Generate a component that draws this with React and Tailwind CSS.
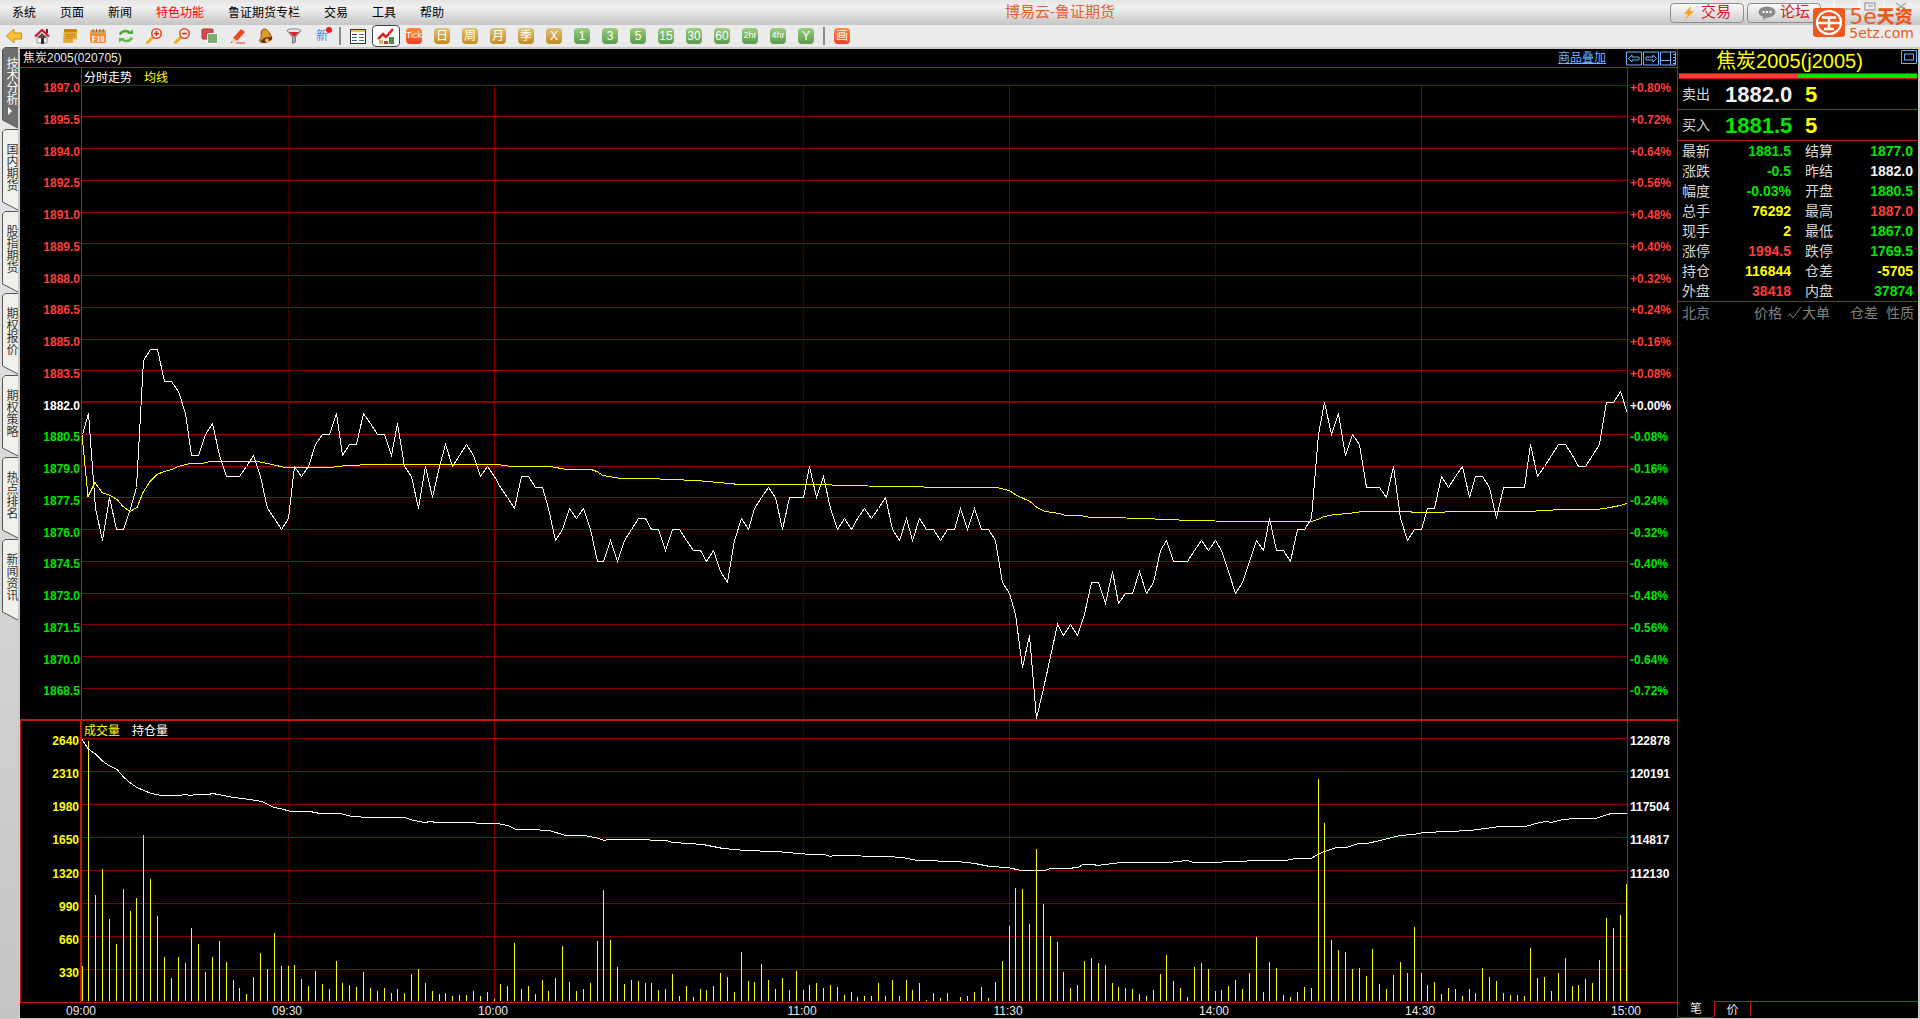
import clsx from 'clsx'

const MENU = ['系统', '页面', '新闻', '特色功能', '鲁证期货专栏', '交易', '工具', '帮助']
const SIDE_TABS = ['技术分析', '国内期货', '股指期货', '期权报价', '期权策略', '热点排名', '新闻资讯']

// one close per minute, 225 trading minutes
const PRICES = [
  1880.5, 1881.5, 1877, 1875.5, 1877.5, 1876, 1876, 1877, 1878, 1884, 1884.5, 1884.5, 1883, 1883, 1882.5,
  1881.5, 1879.5, 1879.5, 1880.5, 1881, 1879.5, 1878.5, 1878.5, 1878.5, 1879, 1879.5, 1878.5, 1877, 1876.5, 1876,
  1876.5, 1879, 1878.5, 1879, 1880, 1880.5, 1880.5, 1881.5, 1879.5, 1880, 1880, 1881.5, 1881, 1880.5, 1880.5,
  1879.5, 1881, 1879, 1878.5, 1877, 1879, 1877.5, 1879, 1880, 1879, 1879.5, 1880, 1879.5, 1878.5, 1879,
  1878.5, 1878, 1877.5, 1877, 1878.5, 1878.5, 1878, 1878, 1877, 1875.5, 1876, 1877, 1876.5, 1877, 1876,
  1874.5, 1874.5, 1875.5, 1874.5, 1875.5, 1876, 1876.5, 1876.5, 1876, 1876, 1875, 1876, 1876, 1875.5, 1875,
  1875, 1874.5, 1875, 1874, 1873.5, 1875.5, 1876.5, 1876, 1877, 1877.5, 1878, 1877.5, 1876, 1877.5, 1877.5,
  1877.5, 1879, 1877.5, 1878.5, 1877, 1876, 1876.5, 1876, 1876.5, 1877, 1876.5, 1877, 1877.5, 1876, 1875.5,
  1876.5, 1875.5, 1876.5, 1876, 1876, 1875.5, 1876, 1876, 1877, 1876, 1877, 1876, 1876, 1875.5, 1873.5,
  1873, 1872, 1869.5, 1871, 1867, 1868.5, 1870, 1871.5, 1871, 1871.5, 1871, 1872, 1873.5, 1873.5, 1872.5,
  1874, 1872.5, 1873, 1873, 1874, 1873, 1873.5, 1875, 1875.5, 1874.5, 1874.5, 1874.5, 1875, 1875.5, 1875,
  1875.5, 1875, 1874, 1873, 1873.5, 1874.5, 1875.5, 1875, 1876.5, 1875, 1875, 1874.5, 1876, 1876, 1876.5,
  1880.5, 1882, 1880.5, 1881.5, 1879.5, 1880.5, 1880, 1878, 1878, 1878, 1877.5, 1879, 1876.5, 1875.5, 1876,
  1876, 1877, 1877, 1878.5, 1878, 1878.5, 1879, 1877.5, 1878.5, 1878.5, 1878, 1876.5, 1878, 1878, 1878,
  1878, 1880, 1878.5, 1879, 1879.5, 1880, 1880, 1879.5, 1879, 1879, 1879.5, 1880, 1882, 1882, 1882.5, 1881.5,
]

// lots per minute, in tens
const VOLUMES = [
  35, 260, 106, 132, 82, 57, 112, 90, 103, 166, 122, 85, 44, 23, 44, 38, 73, 57, 29, 44, 60, 39, 21, 13, 7,
  24, 48, 32, 68, 35, 35, 36, 22, 15, 30, 17, 12, 40, 18, 16, 14, 29, 13, 10, 13, 8, 12, 8, 27, 32,
  18, 10, 7, 8, 5, 6, 6, 10, 5, 9, 2, 17, 15, 58, 12, 15, 7, 21, 10, 23, 55, 19, 10, 12, 18,
  60, 111, 61, 34, 17, 21, 20, 18, 18, 11, 12, 27, 5, 15, 4, 12, 11, 15, 28, 24, 9, 49, 20, 19, 37,
  21, 12, 23, 11, 30, 11, 16, 18, 13, 16, 14, 6, 9, 4, 5, 5, 18, 5, 21, 5, 21, 11, 18, 1, 8,
  3, 8, 0, 4, 5, 9, 14, 3, 19, 40, 75, 113, 112, 77, 152, 97, 65, 59, 29, 13, 16, 40, 43, 38, 36,
  18, 14, 13, 12, 7, 5, 11, 27, 46, 20, 13, 4, 34, 38, 32, 10, 11, 15, 21, 12, 28, 64, 9, 39, 33,
  6, 4, 9, 14, 13, 222, 178, 61, 51, 49, 32, 33, 25, 52, 17, 12, 26, 39, 28, 74, 28, 16, 19, 7, 13,
  12, 5, 12, 8, 33, 24, 20, 8, 6, 6, 5, 53, 23, 24, 10, 28, 43, 15, 16, 22, 18, 41, 83, 73, 86, 117,
]

const AVERAGE =
  '82,434 88,496 95,482 102,492 110,495 117,499 123,506 130,511 137,507 143,492 150,481 157,474 164,471 172,469 178,466 190,463 202,463 210,461 258,461 272,464 285,467 330,467 346,465 374,464 497,464 512,466 550,466 567,469 591,469 597,471 603,475 621,478 648,478 696,480 740,484 830,484 834,485 902,486 945,487 997,487 1009,490 1017,495 1030,501 1037,507 1045,511 1060,513 1065,515 1081,515 1090,517 1109,517 1143,518 1191,520 1239,521 1311,521 1318,519 1324,516 1335,514 1349,513 1363,511 1411,511 1412,512 1444,512 1446,511 1527,511 1562,509 1597,509 1610,507 1620,505 1627,503'

const OPEN_INTEREST =
  '82,739 88,748 96,754 103,761 109,765 117,769 124,777 131,783 137,787 151,793 162,795 180,795 184,794 192,795 194,794 208,794 213,793 218,794 234,797 250,799 262,801 274,807 280,808 291,811 310,811 320,813 340,813 352,816 370,817 404,817 414,820 425,822 430,821 437,822 472,822 480,823 497,823 508,825 516,829 530,829 549,830 566,835 585,835 599,838 604,840 608,839 633,839 666,840 673,842 703,844 723,848 745,850 774,851 790,852 796,853 813,854 825,854 830,856 834,855 888,856 902,857 918,860 957,861 975,863 990,866 1008,867 1021,870 1045,870 1050,868 1067,868 1078,867 1083,864 1094,864 1097,865 1121,862 1169,862 1187,860 1194,862 1204,862 1240,861 1255,860 1286,860 1295,858 1311,858 1318,854 1324,851 1337,847 1347,847 1358,843 1367,843 1380,840 1400,835 1413,834 1424,832 1448,831 1470,830 1485,828 1500,826 1525,826 1540,822 1547,821 1551,822 1563,819 1575,818 1596,818 1607,814 1612,813 1627,813'

const X0 = 82
const PLOT_W = 1545
const STEP = PLOT_W / 225
const PRICE_TOP = 85
const PRICE_H = 634
const VOL_TOP = 738
const VOL_H = 264

const minuteX = i => Math.floor(X0 + i * STEP) + 0.5
const priceY = p => Math.min(Math.floor(PRICE_TOP + (1897 - p) * 21.17), 718) + 0.5

// minute index of each labelled time; breaks are cut out of the session
const TIMES = [
  { at: 0, text: '09:00' },
  { at: 30, text: '09:30', dotted: true },
  { at: 60, text: '10:00' },
  { at: 105, text: '11:00', dotted: true },
  { at: 135, text: '11:30' },
  { at: 165, text: '14:00', dotted: true },
  { at: 195, text: '14:30' },
  { at: 225, text: '15:00' },
]

const PRICE_TICKS = Array.from({ length: 20 }, (_, i) => {
  const pct = (10 - i) * 0.08
  return {
    price: (1897 - i * 1.5).toFixed(1),
    pct: `${pct >= 0 ? '+' : '-'}${Math.abs(pct).toFixed(2)}%`,
    tone: i < 10 ? 'text-[#ff3c3c]' : i === 10 ? 'text-white' : 'text-[#00e600]',
  }
})

const VOL_TICKS = [2640, 2310, 1980, 1650, 1320, 990, 660, 330]
const OI_TICKS = ['122878', '120191', '117504', '114817', '112130', '', '', '']

const RED = 'text-[#ff3c3c]'
const GREEN = 'text-[#00e600]'
const YELLOW = 'text-[#ffff00]'
const WHITE = 'text-[#f0f0f0]'

const QUOTES = [
  ['最新', '1881.5', GREEN, '结算', '1877.0', GREEN],
  ['涨跌', '-0.5', GREEN, '昨结', '1882.0', WHITE],
  ['幅度', '-0.03%', GREEN, '开盘', '1880.5', GREEN],
  ['总手', '76292', YELLOW, '最高', '1887.0', RED],
  ['现手', '2', YELLOW, '最低', '1867.0', GREEN],
  ['涨停', '1994.5', RED, '跌停', '1769.5', GREEN],
  ['持仓', '116844', YELLOW, '仓差', '-5705', YELLOW],
  ['外盘', '38418', RED, '内盘', '37874', GREEN],
]

/* ── toolbar icons, all on a 16px grid ── */

function Icon({ children }) {
  return <svg viewBox="0 0 16 16" className="size-4 overflow-visible">{children}</svg>
}

const BackIcon = () => (
  <Icon><path d="M0.500 8 8 1v4h7.500v6H8v4z" fill="#fcc52a" stroke="#c98a14" /></Icon>
)
const HomeIcon = () => (
  <Icon>
    <path d="M3 8h10v7H3z" fill="#eee" stroke="#999" />
    <path d="M12 1h2v4h-2z" fill="#8a1a1a" />
    <path d="M0 8 8 0.500 16 8l-2 1-6-5.500L2 9z" fill="#c9182a" />
    <path d="M4 9l4-4 4 4v1H4z" fill="#5a4a4a" />
    <path d="M7 10h3v6H7z" fill="#3a2c2c" />
  </Icon>
)
const NoteIcon = () => (
  <Icon>
    <path d="M2 1h13v10l-4 4H1z" fill="#e7a938" />
    <path d="M2 1h13v3H2z" fill="#c78418" />
    <path d="M4 6.500h9M4 8.500h9M3 10.500h7" stroke="#c88a22" />
    <path d="M11 15v-4h4z" fill="#fbe3a2" />
  </Icon>
)
const F10Icon = () => (
  <Icon>
    <rect x="0" y="2" width="16" height="13" rx="2" fill="#f58a34" />
    <rect x="0" y="2" width="16" height="4" rx="2" fill="#d9a35e" />
    <path d="M3 1v3M6.500 1v3M10 1v3M13 1v3" stroke="#8d5a2a" />
    <text x="8" y="14" textAnchor="middle" fontSize="8" fontWeight="bold" fill="#fff" fontFamily="Liberation Serif">F10</text>
  </Icon>
)
const RefreshIcon = () => (
  <Icon>
    <path d="M2 6.500C4 2 10 2 12 5" fill="none" stroke="#4ca83c" strokeWidth="2.500" />
    <path d="M9 6h6V1.500z" fill="#4ca83c" />
    <path d="M14 9.500C12 14 6 14 4 11" fill="none" stroke="#63b84c" strokeWidth="2.500" />
    <path d="M7 10H1v4.500z" fill="#63b84c" />
  </Icon>
)
function ZoomIcon({ plus }) {
  return (
    <Icon>
      <path d="M1.500 14.500 7 9" stroke="#eab020" strokeWidth="3" strokeLinecap="round" />
      <circle cx="10.500" cy="5.500" r="4.700" fill="#fff3f0" stroke="#ea4a30" strokeWidth="1.600" />
      <path d={plus ? 'M8 5.500h5M10.500 3v5' : 'M8 5.500h5'} stroke="#e02a18" strokeWidth="1.600" />
    </Icon>
  )
}
const LayersIcon = () => (
  <Icon>
    <rect x="0" y="1" width="11" height="10" rx="1" fill="#d94848" stroke="#a83434" />
    <rect x="5.500" y="5.500" width="10" height="10" rx="1" fill="#79b070" stroke="#fff" />
  </Icon>
)
const PencilIcon = () => (
  <Icon>
    <path d="M6 15h9" stroke="#d8342a" />
    <path d="M3 10 11 1l4 3-8 9z" fill="#ea4a22" />
    <path d="M3 10l4 3-6 2z" fill="#f2cf9a" />
    <path d="M1.500 13.500 1 15l1.500-.5z" fill="#333" />
  </Icon>
)
const BellIcon = () => (
  <Icon>
    <path d="M4 2c4-3 7 1 10 8L3 14c-3-1-1-2 0-4 1-3-1-5 1-8z" fill="#e09a2c" stroke="#8a4a10" />
    <ellipse cx="8.500" cy="12" rx="6" ry="2.500" transform="rotate(-18 8.500 12)" fill="#5c3210" />
    <circle cx="9" cy="12.500" r="2" fill="#f0c040" />
  </Icon>
)
const FunnelIcon = () => (
  <Icon>
    <path d="M1 2.500 6.500 9v6.500l3-1.500V9L15 2.500z" fill="#a9a9a9" stroke="#777" />
    <ellipse cx="8" cy="2.800" rx="7" ry="2" fill="#e8e8e8" stroke="#888" />
    <path d="M3.500 4h9L8.500 8.500h-1z" fill="#e21e2e" />
  </Icon>
)
const TableIcon = () => (
  <Icon>
    <rect x="0.500" y="1.500" width="15" height="14" fill="#fff" stroke="#333" />
    <path d="M1 3h14" stroke="#f4c542" strokeWidth="2" />
    <path d="M2 6.500h5" stroke="#333" />
    <path d="M9 6.500h5M2 12.500h5" stroke="#2a5fc0" />
    <path d="M2 9.500h5M9 12.500h5" stroke="#24913a" />
    <path d="M9 9.500h5" stroke="#c22" />
  </Icon>
)
const ChartIcon = () => (
  <Icon>
    <path d="M1 12h4v4H1z" fill="#d9b45a" />
    <path d="M6 13h4v3H6z" fill="#c03a28" />
    <path d="M11 9h5v7h-5z" fill="#46923a" />
    <path d="M0 11 5 6l3 3 7-8" fill="none" stroke="#e2201c" strokeWidth="2.500" />
  </Icon>
)
const NewIcon = () => (
  <span className="relative text-xs leading-4 text-[#3f8fe8]">
    新
    <i className="absolute -top-px -right-1 size-1.5 rounded-full bg-[#ff1414]" />
  </span>
)

const TILE_TONES = {
  gold: 'bg-linear-to-b from-[#dcc278] to-[#c68a08]',
  green: 'bg-linear-to-b from-[#9bd07f] to-[#5a9850]',
  red: 'bg-linear-to-b from-[#ff8a3c] to-[#f03c28]',
}

function Tile({ tone, small, children }) {
  return (
    <span
      className={clsx(
        'flex size-4 items-center justify-center rounded-sm text-white',
        small ? 'text-[9px]' : 'text-xs',
        TILE_TONES[tone],
      )}
    >
      {children}
    </span>
  )
}

function ToolButton({ label, active, children }) {
  return (
    <button
      aria-label={label}
      className={clsx(
        'flex h-[22px] w-7 items-center justify-center',
        active && 'rounded-sm border border-[#444] bg-white',
      )}
    >
      {children}
    </button>
  )
}

const Separator = () => <div className="mx-[3px] h-[18px] w-0.5 bg-[#8a8a8a]" />

function MenuBar() {
  return (
    <header className="flex h-[25px] shrink-0 items-center bg-linear-to-b from-[#e6e6e6] via-[#f0f0f0] via-30% to-[#c6c6c6]">
      <nav className="flex gap-6 px-3 text-xs text-black">
        {MENU.map(m => (
          <button key={m} className={clsx('whitespace-nowrap', m === '特色功能' && 'text-[#ff0000]')}>{m}</button>
        ))}
      </nav>
      <h1 className="flex-1 pr-1.5 text-center text-[15px] text-[#e0622e]">博易云-鲁证期货</h1>
      <div className="flex items-center gap-[3px] pr-[99px] text-[15px] text-[#d01c1c]">
        <button className="flex h-5 w-[74px] items-center justify-center gap-1.5 rounded-sm border border-[#8c8c8c] bg-linear-to-b from-[#fafafa] to-[#cfcfcf]">
          <svg viewBox="0 0 12 14" className="h-3.5 w-3"><path d="M8 0 1 8h4l-3 6 9-9H7z" fill="#f7a21c" /></svg>
          交易
        </button>
        <button className="flex h-5 w-[74px] items-center justify-center gap-1 rounded-sm border border-[#8c8c8c] bg-linear-to-b from-[#fafafa] to-[#cfcfcf]">
          <svg viewBox="0 0 18 14" className="h-3.5 w-[18px]">
            <ellipse cx="9" cy="6" rx="8.500" ry="5.500" fill="#8c8c8c" />
            <path d="M5 10v4l5-3z" fill="#8c8c8c" />
            <path d="M4.500 6h2M8 6h2M11.500 6h2" stroke="#fff" strokeWidth="2" />
          </svg>
          论坛
        </button>
      </div>
    </header>
  )
}

// brand stamp that sits over the window controls
function Brand() {
  return (
    <div className="absolute top-0 right-0 flex h-10 items-start pr-1.5">
      <svg viewBox="0 0 104 22" className="absolute top-0 right-0 h-[22px] w-[104px]">
        <path d="M18 0v10M43 0v10M68 0v10" stroke="#fff" />
        <path d="M27 9h8M49 3h10v7h-10zM52 6h5M80 3l10 7M90 3l-10 7" fill="none" stroke="#aaa" strokeWidth="1.500" />
      </svg>
      <svg viewBox="0 0 32 29" className="relative mt-2 mr-1 h-[29px] w-8">
        <rect width="32" height="29" rx="3" fill="#ec5a20" />
        <ellipse cx="16" cy="14.500" rx="12" ry="11.500" fill="none" stroke="#fff" strokeWidth="2.200" />
        <path d="M9 9.500h14M5 15h22M16 9.500V21M11 21h10" stroke="#fff" strokeWidth="2.600" />
      </svg>
      <div className="relative mt-[7px] text-[#ec5a20]">
        <div className="flex h-[19px] items-center font-['DejaVu_Sans','Noto_Sans_CJK_SC',sans-serif] text-[22px]">
          5e<span className="text-lg font-black">天资</span>
        </div>
        <div className="font-['DejaVu_Sans',sans-serif] text-sm leading-[14px]">5etz.com</div>
      </div>
    </div>
  )
}

function Toolbar() {
  return (
    <div className="flex h-[22px] shrink-0 items-center bg-[#ebebeb]">
      <ToolButton label="后退"><BackIcon /></ToolButton>
      <ToolButton label="首页"><HomeIcon /></ToolButton>
      <ToolButton label="公告"><NoteIcon /></ToolButton>
      <ToolButton label="F10"><F10Icon /></ToolButton>
      <ToolButton label="刷新"><RefreshIcon /></ToolButton>
      <ToolButton label="放大"><ZoomIcon plus /></ToolButton>
      <ToolButton label="缩小"><ZoomIcon /></ToolButton>
      <ToolButton label="叠加"><LayersIcon /></ToolButton>
      <ToolButton label="画线"><PencilIcon /></ToolButton>
      <ToolButton label="预警"><BellIcon /></ToolButton>
      <ToolButton label="筛选"><FunnelIcon /></ToolButton>
      <ToolButton label="新"><NewIcon /></ToolButton>
      <Separator />
      <ToolButton label="报价"><TableIcon /></ToolButton>
      <ToolButton label="分时" active><ChartIcon /></ToolButton>
      <ToolButton label="Tick"><Tile tone="red" small>Tick</Tile></ToolButton>
      {['日', '周', '月', '季', 'X'].map(t => (
        <ToolButton key={t} label={t}><Tile tone="gold">{t}</Tile></ToolButton>
      ))}
      {['1', '3', '5', '15', '30', '60', '2hr', '4hr', 'Y'].map(t => (
        <ToolButton key={t} label={t}><Tile tone="green" small={t.length > 2}>{t}</Tile></ToolButton>
      ))}
      <Separator />
      <ToolButton label="画"><Tile tone="red">画</Tile></ToolButton>
    </div>
  )
}

function SideTabs() {
  return (
    <aside className="-mt-0.5 flex w-[18px] shrink-0 flex-col bg-linear-to-b from-[#e9e9ec] to-[#c4c4c4] pl-0.5">
      {SIDE_TABS.map((tab, i) => {
        const on = i === 0
        return (
          <button key={tab} className={clsx('relative h-[82px] w-4', on ? 'text-white' : 'text-[#333]')}>
            <svg viewBox="0 0 16 82" className="absolute inset-0 h-full w-full">
              <path d="M16 .5H3L.5 3v70L16 81" fill={on ? '#6e6e6e' : '#f1f1ec'} stroke="#555" />
            </svg>
            <span
              className={clsx(
                'relative flex h-full items-center pl-0.5 text-xs leading-[13px] [writing-mode:vertical-rl]',
                on ? 'pt-2.5' : 'pt-3.5',
              )}
            >
              {tab}
            </span>
            {on && (
              <svg viewBox="0 0 4 8" className="absolute bottom-3.5 left-1.5 h-2 w-1"><path d="M0 0l4 4-4 4z" fill="#fff" /></svg>
            )}
          </button>
        )
      })}
    </aside>
  )
}

function VerticalLines({ y1, y2 }) {
  return TIMES.slice(1, -1).map(t => (
    <line
      key={t.text}
      x1={minuteX(t.at)}
      x2={minuteX(t.at)}
      y1={y1}
      y2={y2}
      stroke="#870000"
      strokeDasharray={t.dotted ? '1 1' : undefined}
      vectorEffect="non-scaling-stroke"
    />
  ))
}

function PricePlot() {
  const points = PRICES.map((p, i) => `${minuteX(i)},${priceY(p)}`).join(' ')
  return (
    <svg
      viewBox={`${X0} ${PRICE_TOP} ${PLOT_W} ${PRICE_H}`}
      preserveAspectRatio="none"
      shapeRendering="crispEdges"
      className="block min-h-0 w-full flex-1 overflow-visible"
    >
      {PRICE_TICKS.map((t, i) => (
        <line
          key={t.price}
          x1={X0}
          x2={X0 + PLOT_W}
          y1={i === 10 ? 402 : priceY(t.price)}
          y2={i === 10 ? 402 : priceY(t.price)}
          stroke="#870000"
          strokeWidth={i === 10 ? 2 : 1}
          vectorEffect="non-scaling-stroke"
        />
      ))}
      <VerticalLines y1={PRICE_TOP} y2={PRICE_TOP + PRICE_H} />
      <polyline points={points} fill="none" stroke="#fff" vectorEffect="non-scaling-stroke" />
      <polyline points={AVERAGE} transform="translate(0 0.5)" fill="none" stroke="#ffff00" vectorEffect="non-scaling-stroke" />
    </svg>
  )
}

function VolumePlot() {
  return (
    <svg
      viewBox={`${X0} ${VOL_TOP} ${PLOT_W} ${VOL_H}`}
      preserveAspectRatio="none"
      shapeRendering="crispEdges"
      className="block min-h-0 w-full flex-1 overflow-visible"
    >
      {VOL_TICKS.map((v, i) => (
        <line key={v} x1={X0} x2={X0 + PLOT_W} y1={VOL_TOP + i * 33 + 0.5} y2={VOL_TOP + i * 33 + 0.5} stroke="#870000" vectorEffect="non-scaling-stroke" />
      ))}
      <VerticalLines y1={VOL_TOP - 17} y2={VOL_TOP + VOL_H} />
      {VOLUMES.map((v, i) => (
        <line key={i} x1={Math.min(minuteX(i), 1626.5)} x2={Math.min(minuteX(i), 1626.5)} y1={1001 - v} y2={1001} stroke="#ffff00" vectorEffect="non-scaling-stroke" />
      ))}
      <polyline points={OPEN_INTEREST} transform="translate(0 0.5)" fill="none" stroke="#fff" vectorEffect="non-scaling-stroke" />
    </svg>
  )
}

function AxisLabels({ side, labels, className }) {
  return (
    <div
      className={clsx(
        'flex shrink-0 flex-col border-[#c0170c] pt-[13px] pb-[3px] text-xs leading-[14px] font-bold',
        side === 'left' ? 'w-[62px] pr-px text-right' : 'w-[50px] border-l pl-0.5 text-left',
        className,
      )}
    >
      {labels.map((l, i) => (
        <div key={i} className={clsx('min-h-0 flex-1 basis-0', l.tone)}>{l.text}</div>
      ))}
    </div>
  )
}

function ChartPane() {
  return (
    <main className="flex min-w-0 flex-1 flex-col">
      <div className="flex h-[19px] shrink-0 items-center border-b border-[#c0170c] pr-px pl-[3px] text-xs text-[#e8e8e8]">
        <span className="flex-1">焦炭2005(020705)</span>
        <a href="#overlay" className="mr-5 text-[#6cb4ff] underline">商品叠加</a>
        <div className="flex shrink-0 gap-px text-[#6cb4ff]">
          {[
            ['左移', 'M2.500 7.500 6 4v2h7v3H6v2z'],
            ['右移', 'M13.500 7.500 10 4v2H3v3h7v2z'],
            ['布局', 'M1 9.500h10M10.500 1v13M13 3.500h2M13 6.500h2M13 9.500h2M13 12.500h2'],
          ].map(([name, d]) => (
            <button key={name} aria-label={name} className="w-4 shrink-0">
              <svg viewBox="0 0 16 15" className="block h-[15px] w-4" fill="none" stroke="currentColor">
                <path d="M.5 1h15v13H.5z" />
                <path d={d} />
              </svg>
            </button>
          ))}
        </div>
      </div>

      <section className="flex min-h-0 flex-[651] basis-0">
        <AxisLabels side="left" className="border-r" labels={PRICE_TICKS.map(t => ({ text: t.price, tone: t.tone }))} />
        <div className="flex min-w-0 flex-1 flex-col">
          <div className="flex h-[17px] shrink-0 items-center gap-3 pt-0.5 pl-0.5 text-xs">
            <span className="text-white">分时走势</span>
            <span className="text-[#ffff00]">均线</span>
          </div>
          <PricePlot />
        </div>
        <AxisLabels side="right" labels={PRICE_TICKS.map(t => ({ text: t.pct, tone: t.tone }))} />
      </section>

      <div className="h-0.5 shrink-0 bg-[#c0170c]" />

      <section className="flex min-h-0 flex-[281] basis-0">
        <AxisLabels side="left" className="border-r-2 border-l text-[#ffff00]" labels={VOL_TICKS.map(v => ({ text: v }))} />
        <div className="flex min-w-0 flex-1 flex-col">
          <div className="flex h-[17px] shrink-0 items-center gap-3 pt-0.5 pl-0.5 text-xs">
            <span className="text-[#ffff00]">成交量</span>
            <span className="text-white">持仓量</span>
          </div>
          <VolumePlot />
        </div>
        <AxisLabels side="right" className="text-white" labels={OI_TICKS.map(v => ({ text: v }))} />
      </section>

      <div className="h-4 shrink-0 border-t border-[#c0170c] pr-[51px] pl-[61px]">
        <div className="grid grid-cols-[30fr_30fr_45fr_30fr_30fr_30fr_30fr_0] text-xs leading-4 text-[#e8e8e8]">
          {TIMES.map(t => (
            <span key={t.text} className="w-8 -translate-x-1/2 text-center">{t.text}</span>
          ))}
        </div>
      </div>
    </main>
  )
}

function BestQuote({ label, price, tone, lots }) {
  return (
    <div className="flex h-[31px] shrink-0 items-center border-b border-[#c0170c] pl-1">
      <span className="w-[43px] text-sm text-[#d8d8d8]">{label}</span>
      <span className={clsx('w-20 text-[22px] font-bold', tone)}>{price}</span>
      <span className="text-[22px] font-bold text-[#ffff00]">{lots}</span>
    </div>
  )
}

function QuotePanel() {
  return (
    <aside className="flex w-[241px] shrink-0 flex-col border-l border-[#c0170c]">
      <div className="flex h-6 shrink-0 items-start">
        <h2 className="flex-1 text-center text-xl leading-6 text-[#ffff00]">焦炭2005(j2005)</h2>
        <button aria-label="还原" className="mt-px mr-px text-[#6cb4ff]">
          <svg viewBox="0 0 16 14" className="block h-3.5 w-4" fill="none" stroke="currentColor">
            <path d="M.5.5h15v13H.5z" />
            <path d="M3.500 4h9v6h-9z" />
          </svg>
        </button>
      </div>
      <div className="flex h-1.5 shrink-0 border-y border-[#c0170c] px-px">
        <div className="flex-1 bg-[#ff3c3c]" />
        <div className="flex-1 bg-[#00e600]" />
      </div>
      <BestQuote label="卖出" price="1882.0" tone="text-[#f0f0f0]" lots="5" />
      <BestQuote label="买入" price="1881.5" tone="text-[#00e600]" lots="5" />

      <table className="w-full table-fixed border-b border-[#c0170c] text-sm leading-5">
        <tbody>
          {QUOTES.map(([l1, v1, t1, l2, v2, t2]) => (
            <tr key={l1} className="h-5">
              <th scope="row" className="w-9 p-0 pl-1 text-left font-normal text-[#d8d8d8]">{l1}</th>
              <td className={clsx('w-[77px] p-0 text-right font-bold', t1)}>{v1}</td>
              <th scope="row" className="w-[46px] p-0 pl-3.5 text-left font-normal text-[#d8d8d8]">{l2}</th>
              <td className={clsx('p-0 pr-[5px] text-right font-bold', t2)}>{v2}</td>
            </tr>
          ))}
        </tbody>
      </table>

      <div className="flex h-[22px] shrink-0 items-center pr-1 pl-1 text-sm text-[#808080]">
        <span className="flex-1">北京</span>
        <span className="mr-1.5">价格</span>
        <span className="flex items-center">
          <svg viewBox="0 0 14 14" className="size-3.5" fill="none" stroke="currentColor"><path d="M0 10l2-2 3 4 8-11" /></svg>
          大单
        </span>
        <span className="ml-5">仓差</span>
        <span className="ml-2">性质</span>
      </div>

      <div className="flex-1" />

      <div className="flex h-[17px] shrink-0 text-xs leading-4 text-[#e8e8e8]">
        <button className="w-[37px] rounded-b-sm border-r border-b border-[#c0170c]">笔</button>
        <div className="flex-1 border-t border-[#c0170c]">
          <button className="h-[14px] w-9 border-r border-[#c0170c]">价</button>
        </div>
      </div>
    </aside>
  )
}

export default function App() {
  return (
    <div className="relative flex h-screen min-h-[640px] flex-col bg-[#ebebeb] font-['Liberation_Sans','Noto_Sans_CJK_SC',sans-serif]">
      <MenuBar />
      <Brand />
      <Toolbar />
      <div className="flex min-h-0 flex-1 border-t-2 border-r-2 border-b border-[#cdc9c9]">
        <SideTabs />
        <div className="w-0.5 shrink-0 bg-[#cdc9c9]" />
        <div className="flex min-w-0 flex-1 bg-black">
          <ChartPane />
          <QuotePanel />
        </div>
      </div>
    </div>
  )
}
